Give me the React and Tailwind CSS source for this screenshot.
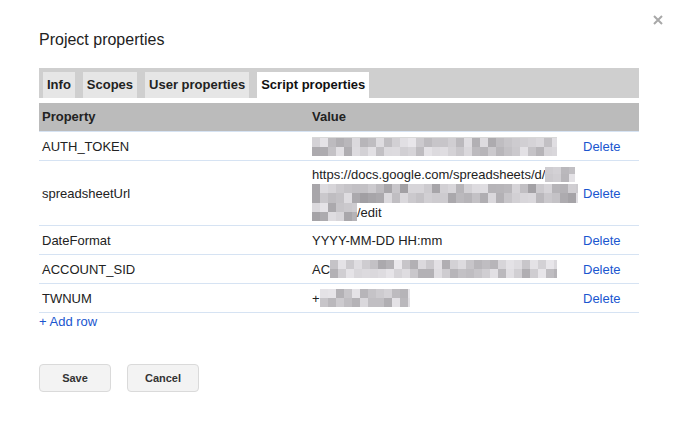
import React from "react";

function rand(seed) {
  let s = seed;
  return () => {
    s = (s * 9301 + 49297) % 233280;
    return s / 233280;
  };
}

function Mosaic({ w, h, seed, lo = 165, hi = 228, cell = 8 }) {
  const r = rand(seed);
  const cols = Math.ceil(w / cell);
  const rows = 2;
  const cells = [];
  for (let y = 0; y < rows; y++) {
    for (let x = 0; x < cols; x++) {
      const v = Math.round(lo + r() * (hi - lo));
      cells.push(
        <div
          key={y + "-" + x}
          style={{
            width: x === cols - 1 ? w - cell * (cols - 1) : cell,
            height: h / rows,
            background: `rgb(${v},${v - 2},${v + 2})`,
          }}
        />
      );
    }
  }
  return (
    <span
      className="inline-flex flex-wrap align-middle"
      style={{ width: w, height: h }}
    >
      {cells}
    </span>
  );
}

function Row({ name, children, tall }) {
  return (
    <div
      className={
        tall
          ? "grid min-h-[29px] grid-cols-[270px_271px_1fr] border-b border-[#d6e3f3] text-[13px] leading-[19px] text-[#222] [&>div]:py-[3.5px]"
          : "grid min-h-[29px] grid-cols-[270px_271px_1fr] border-b border-[#d6e3f3] text-[13px] leading-[19px] text-[#222]"
      }
    >
      <div className="flex items-center pl-[3px]">{name}</div>
      <div className="flex flex-col justify-center pl-[3px]">{children}</div>
      <div className="flex items-center pl-[3px] text-[#1a56cf]">Delete</div>
    </div>
  );
}

export default function App() {
  return (
    <div
      className="relative h-[423px] w-[681px] bg-white px-[39px] pr-[42px] pt-[30px]"
      style={{ fontFamily: '"Liberation Sans", Arial, sans-serif' }}
    >
      <svg
        className="absolute right-[18px] top-[15px]"
        width="10"
        height="10"
        viewBox="0 0 10 10"
      >
        <path d="M1 1L9 9M9 1L1 9" stroke="#a8a8a8" strokeWidth="2" />
      </svg>

      <div className="text-[16px] leading-[20px] text-[#222]">Project properties</div>

      <div className="mt-[18px] flex h-[30px] items-end gap-2 bg-[#cfcfcf] pl-1">
        {["Info", "Scopes", "User properties"].map((t) => (
          <div
            key={t}
            className="h-[26px] bg-[#e6e6e6] px-1 text-[13px] font-bold leading-[26px] text-[#222]"
          >
            {t}
          </div>
        ))}
        <div className="h-[26px] bg-white px-1 text-[13px] font-bold leading-[26px] text-[#111]">
          Script properties
        </div>
      </div>

      <div className="mt-[5px] grid h-[29px] grid-cols-[270px_271px_1fr] border-b border-[#d6e3f3] bg-[#bbbbbb] text-[13px] font-bold leading-[28px] text-[#222]">
        <div className="pl-[3px]">Property</div>
        <div className="pl-[3px]">Value</div>
        <div />
      </div>

      <Row name="AUTH_TOKEN">
        <div className="flex h-[19px] flex-col">
          <div className="h-px w-[245px] bg-[#d8d8d8]" />
          <Mosaic w={245} h={18} seed={11} lo={170} hi={235} />
        </div>
      </Row>

      <Row name="spreadsheetUrl" tall>
        <div className="flex items-center whitespace-nowrap">
          https://docs.google.com/spreadsheets/d/
          <Mosaic w={30} h={15} seed={7} lo={180} hi={235} />
        </div>
        <div className="flex items-center">
          <Mosaic w={266} h={19} seed={23} lo={160} hi={225} />
        </div>
        <div className="flex items-center">
          <Mosaic w={45} h={18} seed={41} lo={160} hi={230} />
          /edit
        </div>
      </Row>

      <Row name="DateFormat">
        <div>YYYY-MM-DD HH:mm</div>
      </Row>

      <Row name="ACCOUNT_SID">
        <div className="flex items-center">
          AC
          <Mosaic w={227} h={18} seed={5} lo={170} hi={235} />
        </div>
      </Row>

      <Row name="TWNUM">
        <div className="flex items-center">
          +
          <Mosaic w={90} h={18} seed={17} lo={175} hi={235} />
        </div>
      </Row>

      <div className="text-[13px] leading-[18px] text-[#1a56cf]">+ Add row</div>

      <div className="mt-[33px] flex gap-4">
        <button className="h-[28px] w-[72px] rounded-sm border border-[#dadada] bg-[#f3f3f3] text-[11px] font-bold text-[#333]">
          Save
        </button>
        <button className="h-[28px] w-[72px] rounded-sm border border-[#dadada] bg-[#f3f3f3] text-[11px] font-bold text-[#333]">
          Cancel
        </button>
      </div>
    </div>
  );
}
